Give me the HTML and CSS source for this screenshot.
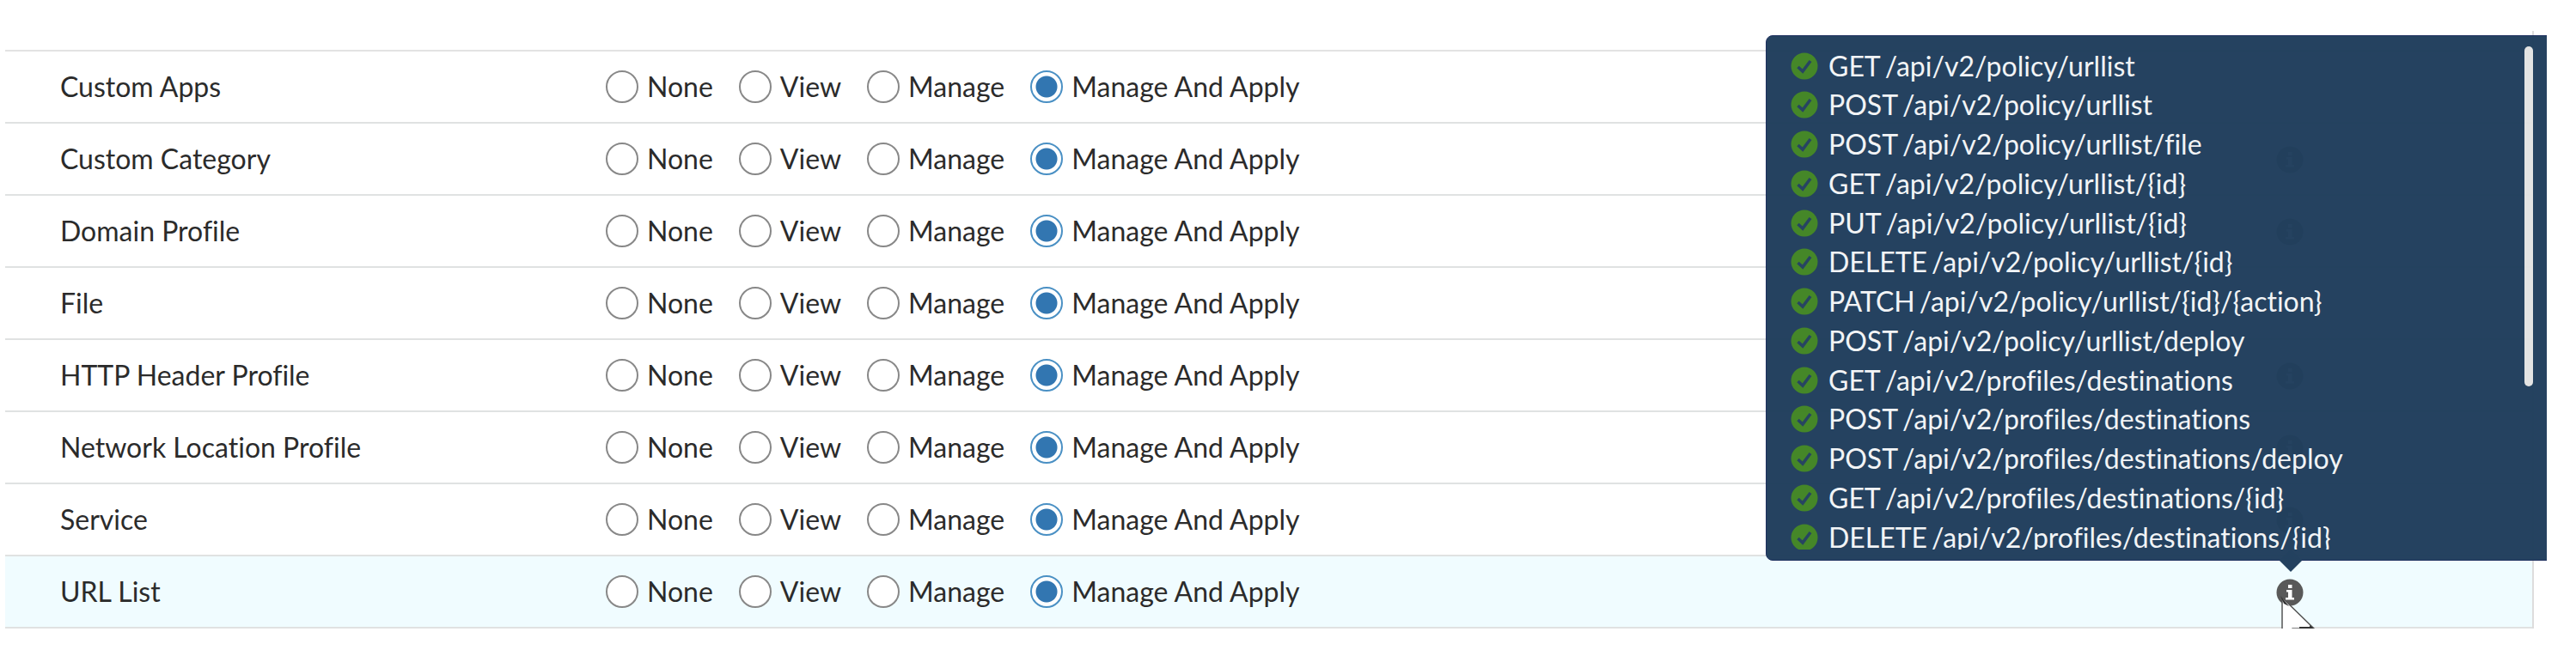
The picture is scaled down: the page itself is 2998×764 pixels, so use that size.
FILE: index.html
```html
<!DOCTYPE html>
<html lang="en">
<head>
    <meta charset="UTF-8">
    <meta name="viewport" content="width=device-width, initial-scale=1.0">
    <title>Role Permissions</title>
    <link rel="stylesheet" href="styles.css">
</head>
<body>
    <!-- shared icons -->
    <svg class="sprite" aria-hidden="true">
        <symbol id="icon-info" viewBox="0 0 32 32">
            <circle cx="16" cy="16" r="15.5" fill="#595959"/>
            <path d="M14 7h4.500v4H14zM12 13h6.500v9H21v2.500H11V22h3v-6.500h-2z" fill="#fff"/>
        </symbol>
        <symbol id="icon-check" viewBox="0 0 32 32">
            <circle cx="16" cy="16" r="15.500" fill="#428524"/>
            <path d="M8.500 17l5.500 5 9-12" fill="none" stroke="#23415f" stroke-width="3.600"/>
        </symbol>
    </svg>
    <div class="page">
        <div class="panel">
            <table class="permissions">
                <tbody id="rows"></tbody>
            </table>
            <div class="tooltip" role="tooltip">
                <div class="view">
                    <ul class="endpoints" id="endpoints"></ul>
                </div>
                <div class="thumb"></div>
            </div>
            <span class="arrow"></span>
            <svg class="cursor" viewBox="0 0 44 60">
                <path d="M2 2v52l12-16h25z" fill="#fff" stroke="#555" stroke-width="1.500"/>
                <path d="M0 0l10 12-6-3zM22 36h15v3H22zM34 34l6 5h-6z" fill="#333"/>
            </svg>
        </div>
    </div>
    <script>
        // info: whether the row has an endpoint list
        var items = [
            {name: 'Custom Apps', info: false},
            {name: 'Custom Category', info: true},
            {name: 'Domain Profile', info: true},
            {name: 'File', info: false},
            {name: 'HTTP Header Profile', info: true},
            {name: 'Network Location Profile', info: true},
            {name: 'Service', info: true},
            {name: 'URL List', info: true, active: true}
        ];
        var levels = ['None', 'View', 'Manage', 'Manage And Apply'];
        var endpoints = [
            'GET /api/v2/policy/urllist',
            'POST /api/v2/policy/urllist',
            'POST /api/v2/policy/urllist/file',
            'GET /api/v2/policy/urllist/{id}',
            'PUT /api/v2/policy/urllist/{id}',
            'DELETE /api/v2/policy/urllist/{id}',
            'PATCH /api/v2/policy/urllist/{id}/{action}',
            'POST /api/v2/policy/urllist/deploy',
            'GET /api/v2/profiles/destinations',
            'POST /api/v2/profiles/destinations',
            'POST /api/v2/profiles/destinations/deploy',
            'GET /api/v2/profiles/destinations/{id}',
            'DELETE /api/v2/profiles/destinations/{id}'
        ];

        var html = '';
        items.forEach(function(item, i){
            html += '<tr' + (item.active ? ' class="active"' : '') + '>';
            html += '<th class="name" scope="row">' + item.name + '</th><td><div class="options">';
            levels.forEach(function(level, j){
                var id = 'p' + i + '-' + j;
                html += '<label class="option" for="' + id + '"><input type="radio" id="' + id + '" name="p' + i + '"' + (j == 3 ? ' checked' : '') + '>' + level + '</label>';
            });
            html += '</div></td><td class="more">';
            if(item.info){
                html += '<button type="button" class="info" aria-label="Endpoints"><svg><use href="#icon-info"/></svg></button>';
            }
            html += '</td></tr>';
        });
        document.querySelector('#rows').innerHTML = html;

        document.querySelector('#endpoints').innerHTML = endpoints.map(function(text){
            var parts = text.split(' ');
            return '<li><svg><use href="#icon-check"/></svg><span class="method">' + parts[0] + '</span> <span>' + parts[1] + '</span></li>';
        }).join('');
    </script>
</body>
</html>
```
FILE: styles.css
```css
*{
    box-sizing: border-box;
}
body{
    margin: 0;
    background: #fff;
    color: #2b2b2b;
    font-family: Lato, "Liberation Sans", sans-serif;
    font-size: 32px;
    line-height: 40px;
    font-variant-ligatures: none;
}
.sprite{
    position: absolute;
    width: 0;
    height: 0;
}
.page{
    margin: 36px 34px 0 6px;
    padding-right: 15px;
    overflow: hidden;
}
.panel{
    position: relative;
    padding-top: 22px;
    border-right: 2px solid #ddd;
}

/* permission rows */
.permissions{
    width: 100%;
    table-layout: fixed;
    border-spacing: 0;
    border-top: 2px solid #e3e3e3;
}
.permissions th,
.permissions td{
    height: 84px;
    padding: 0;
    border-bottom: 2px solid #e0e2e2;
    vertical-align: middle;
}
.permissions .name{
    width: 699px;
    padding-left: 64px;
    font-weight: 400;
    text-align: left;
}
.permissions .more{
    width: 564px;
    text-align: center;
}
.active{
    background: #f0fcff;
}
.options{
    display: flex;
    gap: 30px;
}
.option{
    display: flex;
    align-items: center;
    gap: 10px;
}
.option input{
    appearance: none;
    width: 38px;
    height: 38px;
    margin: 0;
    border: 2px solid #888;
    border-radius: 50%;
    background: #fff;
}
.option input:checked{
    border-color: #4a90c4;
    background: radial-gradient(circle, #3276b1 12px, #fff 13px);
}
.info{
    display: block;
    margin: 2px auto 0;
    padding: 0;
    border: 0;
    background: none;
}
.info svg{
    display: block;
    width: 32px;
    height: 32px;
}

/* endpoint list */
.tooltip{
    position: absolute;
    right: -25px;
    bottom: 79px;
    display: flex;
    justify-content: space-between;
    width: 917px;
    padding: 12px 23px 12px 28px;
    border: 1px solid #1b2c5c;
    border-radius: 8px;
    background: #213f5d;
    color: #f2f4f6;
    opacity: .98;
}
.view{
    height: 586px;
    overflow: hidden;
}
.endpoints{
    display: flex;
    flex-direction: column;
    justify-content: space-between;
    height: 594px;
    margin: 0;
    padding: 0;
    list-style: none;
}
.endpoints li{
    display: flex;
    align-items: center;
    height: 45px;
    white-space: nowrap;
}
.endpoints svg{
    width: 32px;
    height: 32px;
    margin-right: 12px;
}
.method{
    margin-right: 5px;
}
.thumb{
    width: 10px;
    height: 396px;
    border-radius: 5px;
    background: #e3e3e3;
}
.arrow{
    position: absolute;
    right: 268px;
    bottom: 66px;
    width: 26px;
    height: 26px;
    background: #23415f;
    clip-path: polygon(50% 0, 100% 50%, 50% 100%, 0 50%);
}
.cursor{
    position: absolute;
    right: 249px;
    top: 658px;
    width: 44px;
    height: 60px;
}
```
